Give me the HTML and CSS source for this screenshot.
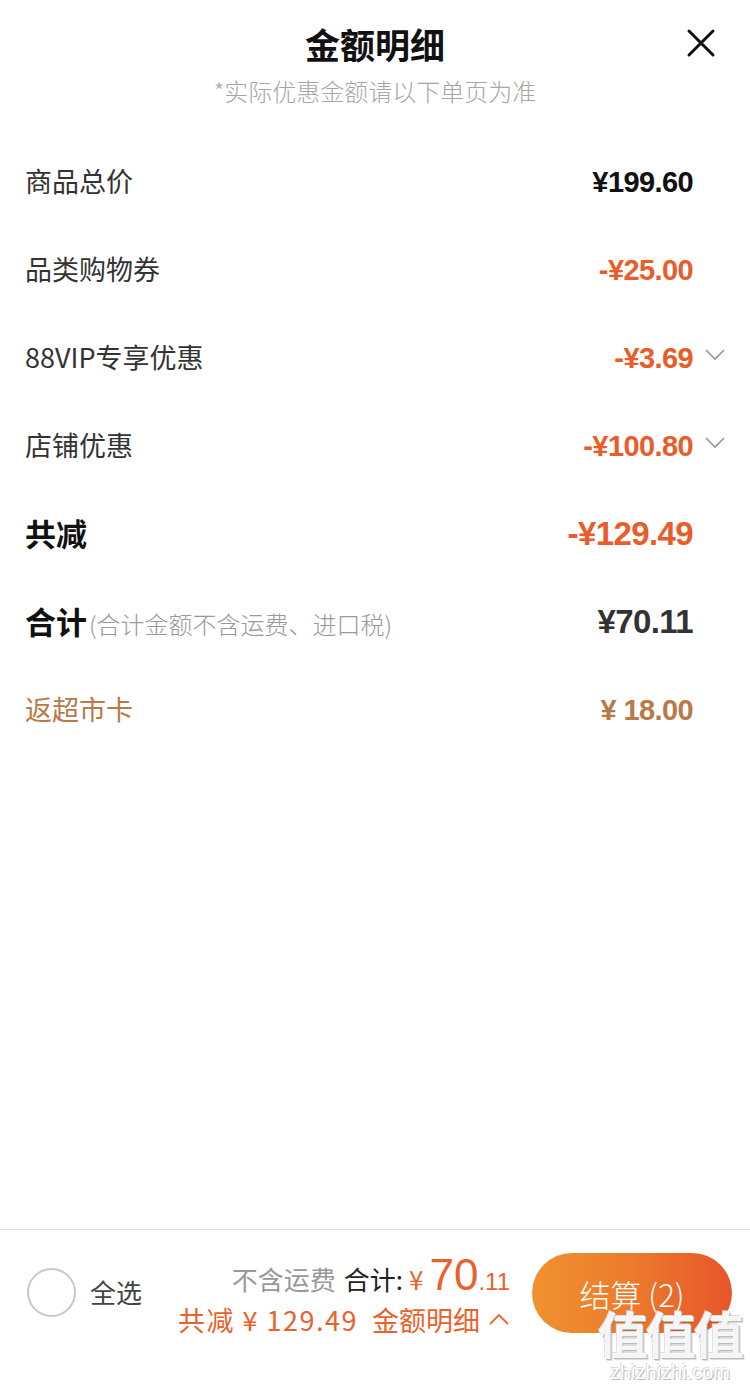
FILE: index.html
```html
<!DOCTYPE html>
<html lang="zh-CN">
<head>
<meta charset="utf-8">
<title>金额明细</title>
<link rel="stylesheet" href="styles.css">
</head>
<body>
<div class="page">
  <header class="head">
    <h1 class="title">金额明细</h1>
    <p class="sub">*实际优惠金额请以下单页为准</p>
    <button class="close" aria-label="关闭">
      <svg width="30" height="30" viewBox="0 0 30 30"><path d="M3 3 L27 27 M27 3 L3 27" stroke="#111" stroke-width="3" stroke-linecap="round" fill="none"/></svg>
    </button>
  </header>

  <ul class="list">
    <li class="row">
      <span class="label">商品总价</span>
      <span class="amt dark">¥199.60</span>
      <span class="arrow"></span>
    </li>
    <li class="row">
      <span class="label">品类购物券</span>
      <span class="amt orange">-¥25.00</span>
      <span class="arrow"></span>
    </li>
    <li class="row">
      <span class="label">88VIP专享优惠</span>
      <span class="amt orange">-¥3.69</span>
      <span class="arrow"><svg width="20" height="12" viewBox="0 0 20 12"><path d="M1 1 L10 10 L19 1" stroke="#999" stroke-width="1.6" fill="none"/></svg></span>
    </li>
    <li class="row">
      <span class="label">店铺优惠</span>
      <span class="amt orange">-¥100.80</span>
      <span class="arrow"><svg width="20" height="12" viewBox="0 0 20 12"><path d="M1 1 L10 10 L19 1" stroke="#999" stroke-width="1.6" fill="none"/></svg></span>
    </li>
    <li class="row">
      <span class="label strong">共减</span>
      <span class="amt orange big">-¥129.49</span>
      <span class="arrow"></span>
    </li>
    <li class="row">
      <span class="label strong">合计<span class="note">(合计金额不含运费、进口税)</span></span>
      <span class="amt dark2 big">¥70.11</span>
      <span class="arrow"></span>
    </li>
    <li class="row">
      <span class="label brown">返超市卡</span>
      <span class="amt brown">¥ 18.00</span>
      <span class="arrow"></span>
    </li>
  </ul>

  <footer class="bar">
    <span class="radio"></span>
    <span class="all">全选</span>
    <div class="sum">
      <div class="line1">
        <span class="grey">不含运费</span>
        <span class="total-label">合计:</span>
        <span class="yen">¥</span><span class="int">70</span><span class="dec">.11</span>
      </div>
      <div class="line2">
        <span class="saved">共减 ¥ 129.49</span>
        <span class="detail">金额明细</span>
        <svg width="22" height="14" viewBox="0 0 22 14"><path d="M2 12 L11 3 L20 12" stroke="#e86a2e" stroke-width="1.8" fill="none"/></svg>
      </div>
    </div>
    <button class="pay">结算 (2)</button>
    <div class="wm">
      <span class="wm-big">值值值</span>
      <span class="wm-small">zhizhizhi.com</span>
    </div>
  </footer>
</div>
</body>
</html>
```
FILE: styles.css
```css
* { box-sizing: border-box; }
html, body { margin: 0; padding: 0; background: #fff; }
body {
  width: 750px;
  height: 1391px;
  font-family: "Noto Sans CJK SC", "Noto Sans", sans-serif;
  color: #333;
  overflow: hidden;
}
.page {
  height: 1391px;
  display: flex;
  flex-direction: column;
}
.head {
  position: relative;
  padding-top: 20px;
  text-align: center;
}
.title {
  margin: 0;
  font-size: 35px;
  line-height: 48px;
  font-weight: 700;
  color: #111;
}
.sub {
  margin: 5px 0 0;
  font-size: 24px;
  line-height: 36px;
  color: #a6a6a6;
  font-weight: 300;
}
.close {
  position: absolute;
  right: 34px;
  top: 28px;
  width: 30px;
  height: 30px;
  padding: 0;
  border: 0;
  background: none;
  display: flex;
}
.list {
  list-style: none;
  margin: 0;
  padding: 27px 25px 0 25px;
}
.row {
  height: 88px;
  display: flex;
  align-items: center;
}
.label {
  flex: 1;
  font-size: 27px;
  color: #333;
  font-weight: 400;
  display: flex;
  align-items: baseline;
}
.label.strong {
  font-size: 31px;
  font-weight: 700;
  color: #111;
}
.note {
  font-size: 24px;
  font-weight: 300;
  color: #999;
  margin-left: 2px;
}
.label.brown { color: #b77a48; }
.amt {
  font-family: "Liberation Sans", Arial, sans-serif;
  font-weight: 700;
  font-size: 29px;
  letter-spacing: -0.6px;
  margin-top: 4px;
}
.amt.big { font-size: 33px; }
.dark { color: #111; }
.dark2 { color: #333; }
.orange { color: #e85d2a; }
.amt.brown { color: #b77a48; }
.arrow {
  width: 32px;
  display: flex;
  justify-content: flex-end;
  align-items: center;
  margin-top: -2px;
}
.bar {
  margin-top: auto;
  height: 162px;
  border-top: 1px solid #e2e2e2;
  padding: 23px 18px 0 27px;
  display: flex;
  align-items: flex-start;
  position: relative;
}
.radio {
  width: 49px;
  height: 49px;
  border-radius: 50%;
  border: 2px solid #c8c8c8;
  margin-top: 15px;
  flex: none;
}
.all {
  margin-left: 14px;
  font-size: 26px;
  line-height: 36px;
  color: #444;
  margin-top: 21px;
}
.sum {
  margin-left: auto;
  display: flex;
  flex-direction: column;
  align-items: flex-end;
}
.line1 {
  display: flex;
  align-items: baseline;
  height: 44px;
  font-size: 26px;
  color: #333;
}
.grey { color: #999; margin-right: 8px; }
.total-label { color: #222; }
.yen { color: #e8622c; margin-left: 6px; margin-right: 6px; }
.int {
  font-family: "Liberation Sans", Arial, sans-serif;
  font-size: 44px;
  line-height: 44px;
  color: #e8622c;
}
.dec {
  font-family: "Liberation Sans", Arial, sans-serif;
  font-size: 24px;
  color: #e8622c;
}
.line2 {
  display: flex;
  align-items: center;
  gap: 14px;
  margin-top: 6px;
  font-size: 27px;
  line-height: 34px;
  color: #e8622c;
}
.saved { letter-spacing: 1.5px; }
.line2 svg { margin-left: -6px; margin-top: -2px; }
.pay {
  margin-left: 22px;
  width: 200px;
  height: 80px;
  border: 0;
  border-radius: 40px;
  background: linear-gradient(90deg, #f0922f 0%, #ec7a2c 50%, #e6552a 100%);
  color: #fff;
  font-family: "Noto Sans CJK SC", sans-serif;
  font-size: 31px;
  font-weight: 300;
  padding: 0;
  flex: none;
}
.wm {
  position: absolute;
  right: 8px;
  top: 74px;
  display: flex;
  flex-direction: column;
  align-items: center;
  pointer-events: none;
}
.wm-big {
  font-size: 50px;
  line-height: 56px;
  font-weight: 700;
  color: rgba(255,255,255,0.85);
  letter-spacing: -2px;
  text-shadow: 1px 1px 0 #bbb, -1px -1px 0 #ddd, 2px 2px 1px rgba(0,0,0,0.15);
}
.wm-small {
  font-family: "Liberation Sans", Arial, sans-serif;
  font-size: 20px;
  line-height: 24px;
  color: #fff;
  text-shadow: 1px 1px 0 #bbb, -1px -1px 0 #ddd;
}
```
